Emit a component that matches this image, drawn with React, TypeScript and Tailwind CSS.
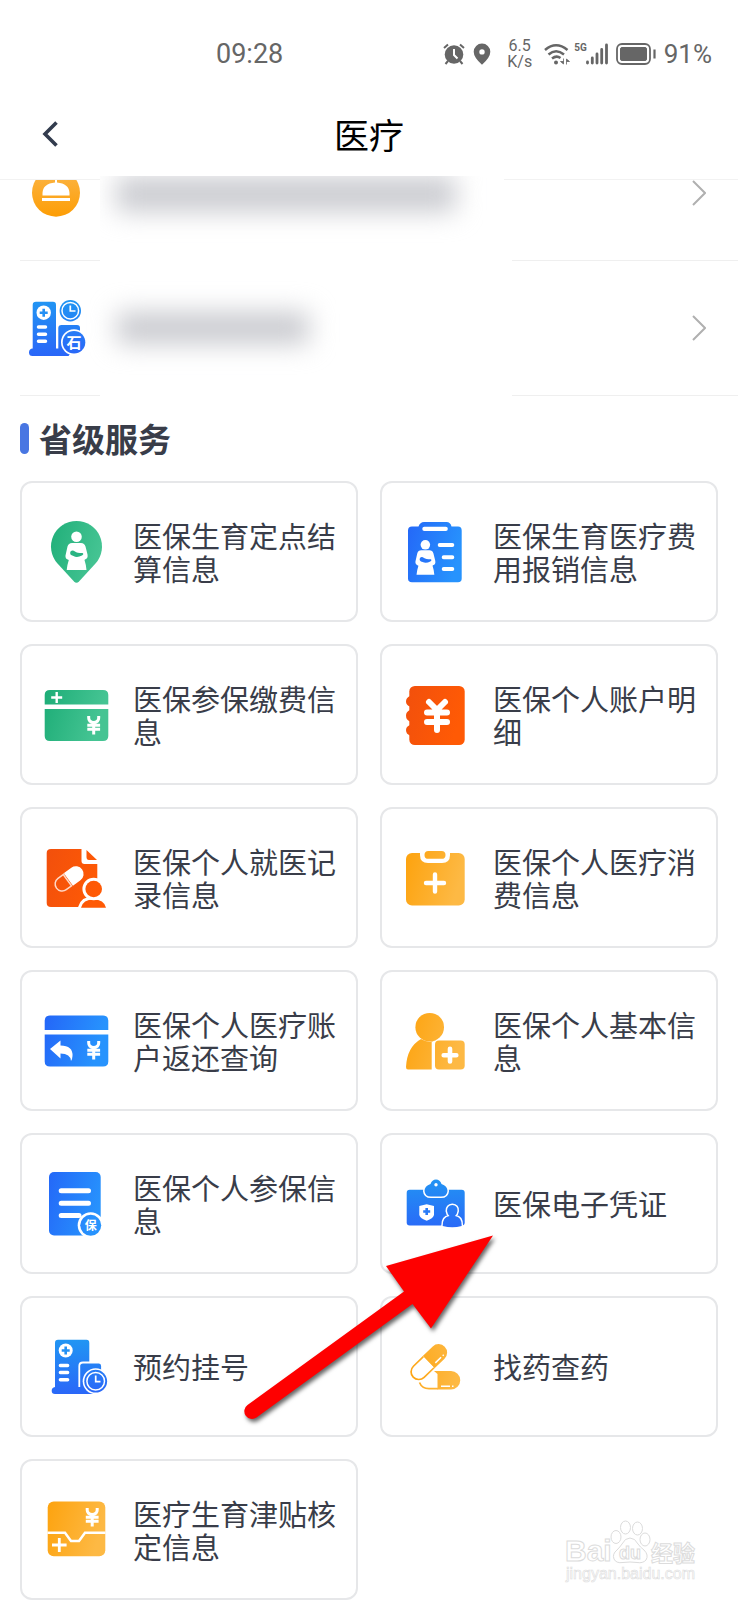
import React from 'react';

type Tone = 'blue' | 'blueDown' | 'green' | 'red' | 'orange';

const tones: Record<Tone, { from: string; to: string; down?: boolean }> = {
  blue: { from: '#2468f8', to: '#2793fd' },
  blueDown: { from: '#2196f3', to: '#2a66f8', down: true },
  green: { from: '#1fae78', to: '#45c493' },
  red: { from: '#f2500c', to: '#ff5a05' },
  orange: { from: '#fda30f', to: '#fdb944' },
};

interface IconProps {
  id: string;
  tone: Tone;
  children: React.ReactNode;
}

function Icon({ id, tone, children }: IconProps) {
  const { from, to, down } = tones[tone];
  return (
    <svg viewBox="0 0 65 64" className="h-16 w-[65px] shrink-0" fill={`url(#${id})`} aria-hidden="true">
      <defs>
        <linearGradient id={id} gradientUnits="userSpaceOnUse" x1="4" y1="4" x2={down ? 4 : 60} y2={down ? 60 : 20}>
          <stop stopColor={from} />
          <stop offset="1" stopColor={to} />
        </linearGradient>
      </defs>
      {children}
    </svg>
  );
}

// Yuan sign inside a 14x19 box
function Yuan({ x, y }: { x: number; y: number }) {
  return (
    <path
      transform={`translate(${x} ${y})`}
      d="M2.200 .5V2.500Q2.200 6.500 7.200 7Q12.200 6.500 12.200 2.500V.5M7.200 6V19M.8 9.700H13.600M.8 13.800H13.600"
      fill="none"
      stroke="#fff"
      strokeWidth="3"
    />
  );
}

function Mother({ x, y, baby }: { x: number; y: number; baby: string }) {
  return (
    <g transform={`translate(${x} ${y})`}>
      <circle cx="11.500" cy="5.300" r="5.300" fill="#fff" />
      <path
        d="M7 11.500H16Q19.500 11.500 20.500 15L22.500 23Q23.300 27 20 28L19.500 28.500Q21 33 21.500 38.500H1.700Q2.300 33 3.800 28.500Q0 27.500 .5 24L2.500 15Q3.500 11.500 7 11.500Z"
        fill="#fff"
      />
      <path
        d="M5.500 20Q7.500 17.800 10 20Q12 21.500 17.500 21.500Q19.300 22.500 17 24Q12 26.500 8.500 24.500Q4 23.500 5.500 20Z"
        fill={baby}
      />
    </g>
  );
}

const icons = {
  pin: (
    <Icon id="pin" tone="green">
      <path d="M32.500 1A25.500 25.500 0 0 1 51.500 43.500L35 61.500Q32.500 64 30 61.500L13.500 43.500A25.500 25.500 0 0 1 32.500 1Z" />
      <Mother x={21} y={11.5} baby="#2ab482" />
    </Icon>
  ),
  clipboard: (
    <Icon id="clipboard" tone="blue">
      <path d="M8 6.500H14.500Q16 2 20 2H42.500Q46.500 2 47.500 6.500H54Q57.700 6.500 57.700 10.500V58.500Q57.700 62.300 54 62.300H8Q4 62.300 4 58.500V10.500Q4 6.500 8 6.500Z" />
      <rect x="18.300" y="6.700" width="25.500" height="4.300" rx="2" fill="#fff" />
      <g transform="translate(11 20) scale(.9)">
        <Mother x={0} y={0} baby="#2676fa" />
      </g>
      <path d="M35.700 25H48.300M39.700 37.300H48.300M39.700 49H48.300" stroke="#fff" strokeWidth="4" strokeLinecap="round" />
    </Icon>
  ),
  card: (
    <Icon id="card" tone="green">
      <path d="M6 7H59Q64.300 7 64.300 12V21.500H.7V12Q.7 7 6 7ZM.7 26H64.300V53Q64.300 58 59 58H6Q.7 58 .7 53Z" />
      <path d="M12.700 9V20M7.200 14.500H18.200" stroke="#fff" strokeWidth="2.400" />
      <Yuan x={42.5} y={32.5} />
    </Icon>
  ),
  account: (
    <Icon id="account" tone="red">
      <rect x="5.300" y="3" width="55.400" height="59" rx="5.500" />
      <path d="M10 13H6Q2 14.500 2 18.500Q2 22 6 23.500H10ZM10 27H6Q2 28.500 2 32.500Q2 37 6 38.500H10ZM10 42H6Q2 43.500 2 47Q2 51 6 52.500H10Z" />
      <path d="M25 19L33 27L41 19M23 29.500H43M23 39H43M33 27V47" fill="none" stroke="#fff" strokeWidth="6" strokeLinecap="round" strokeLinejoin="round" />
    </Icon>
  ),
  record: (
    <Icon id="record" tone="red">
      <path d="M7 3H37.500V15Q37.500 18 40.500 18H53.300V61H7Q2.700 61 2.700 57V7Q2.700 3 7 3ZM42.500 4L53 14H45Q42.500 14 42.500 11Z" />
      <g transform="rotate(-36 25 33)">
        <path d="M25 26H33.500A7 7 0 0 1 33.500 40H25Z" fill="#fff" stroke="#fff" strokeWidth="1.500" />
        <path d="M25 26H16.500A7 7 0 0 0 16.500 40H23V26" fill="none" stroke="#ffd8c6" strokeWidth="1.500" />
      </g>
      <g stroke="#fff" strokeWidth="6" paintOrder="stroke">
        <path d="M37 61.700Q39 53.500 49.500 53.500Q60 53.500 62 61.700Z" />
        <circle cx="49.700" cy="43" r="8.300" />
      </g>
      <path d="M34 62H65V64H34Z" fill="#fff" />
    </Icon>
  ),
  expense: (
    <Icon id="expense" tone="orange">
      <rect x="2" y="7" width="58.700" height="52.500" rx="6" />
      <path d="M16 6V9Q16 17 24 17H38Q46 17 46 9V6Z" fill="#fff" />
      <rect x="20.500" y="5" width="21" height="7.800" rx="3.900" />
      <path d="M31 28.500V45.500M22 37H40" stroke="#fff" strokeWidth="4.400" strokeLinecap="round" />
    </Icon>
  ),
  refund: (
    <Icon id="refund" tone="blue">
      <path d="M6 6.500H59Q64.300 6.500 64.300 11.500V21H.7V11.500Q.7 6.500 6 6.500ZM.7 25.500H64.300V52.500Q64.300 57.500 59 57.500H6Q.7 57.500 .7 52.500Z" />
      <path d="M6 40L16.500 31.500V36.500Q29 36.500 28.500 47Q28.300 50.500 27 52Q26.500 44.500 16.500 44.500V49.500Z" fill="#fff" />
      <Yuan x={42.5} y={31.5} />
    </Icon>
  ),
  profile: (
    <Icon id="profile" tone="orange">
      <circle cx="25.700" cy="18.200" r="14.300" />
      <path d="M17 30Q26 35.500 34 30L27.700 33V60.500H4Q2 60.500 2 58Q3 38 17 30Z" />
      <rect x="31" y="31.500" width="29.700" height="29" rx="4" />
      <path d="M46 39.800V52.500M39.700 46.200H52.300" stroke="#fff" strokeWidth="4.600" strokeLinecap="round" />
    </Icon>
  ),
  insured: (
    <Icon id="insured" tone="blue">
      <rect x="5" y="0" width="51.700" height="63.500" rx="5" />
      <path d="M17.200 18.800H44.500M17.200 31.200H44.500M17.200 43.500H35" stroke="#fff" strokeWidth="5" strokeLinecap="round" />
      <circle cx="46.700" cy="53.300" r="13" fill="#fff" />
      <circle cx="46.700" cy="53.300" r="10.500" />
      <text x="46.700" y="57.800" textAnchor="middle" fill="#fff" className="font-['Noto_Sans_CJK_SC',sans-serif] text-[12px] font-bold">
        保
      </text>
    </Icon>
  ),
  voucher: (
    <Icon id="voucher" tone="blueDown">
      <rect x="2.700" y="17.800" width="58" height="35.700" rx="3" />
      <path
        d="M32 7.500Q36 7.500 37.500 12Q43.500 14 43.500 19Q43 24.500 37 24.500H27Q21 24.500 20.500 19Q20.500 14 26.500 12Q28 7.500 32 7.500Z"
        stroke="#fff"
        strokeWidth="3"
        paintOrder="stroke"
      />
      <circle cx="32" cy="12.800" r="1.700" fill="#fff" />
      <path d="M15.300 34L22.700 32.300L30 34V43Q29 46.500 22.700 48.700Q16.300 46.500 15.300 43Z" fill="#fff" />
      <path d="M22.700 36V43M19.200 39.500H26.200" stroke="#287af7" strokeWidth="2.600" />
      <path
        d="M48.300 33Q54 33.500 53.500 39Q53 42.500 51 44Q58 45 57.700 54Q48.300 56.500 38.700 54Q38.500 45 45.500 44Q43.500 42.500 43 39Q43 33.500 48.300 33Z"
        stroke="#fff"
        strokeWidth="3"
        paintOrder="stroke"
      />
    </Icon>
  ),
  booking: (
    <Icon id="booking" tone="blueDown">
      <path d="M14 4.800H42.500Q45.300 4.800 45.300 8V59H11Q7.700 59 7.700 55.700Q7.700 52.500 11 52V8Q11 4.800 14 4.800Z" />
      <path d="M35.300 52V31Q35.300 27.500 39 27.500H55Q58 27.500 58 31V59H40" stroke="#fff" strokeWidth="1.800" />
      <path d="M35 53H50V59H30Z" />
      <circle cx="21.700" cy="15.500" r="7" fill="#fff" />
      <path d="M21.700 11.500V19.500M17.700 15.500H25.700" stroke="#2491f4" strokeWidth="2.600" />
      <path d="M16.400 30.500H23.600M16.400 37.500H23.600M16.400 44.700H23.600" stroke="#fff" strokeWidth="3.500" strokeLinecap="round" />
      <circle cx="51.700" cy="46.200" r="13" fill="#fff" />
      <circle cx="51.700" cy="46.200" r="11.400" />
      <circle cx="51.700" cy="46.200" r="8.800" fill="none" stroke="#fff" strokeWidth="1.500" />
      <path d="M51.700 40.500V46.700H56.500" fill="none" stroke="#fff" strokeWidth="1.700" />
    </Icon>
  ),
  pills: (
    <Icon id="pills" tone="orange">
      <path d="M30 36H47A9.200 9.200 0 0 1 47 54.500H33.500V39Z" />
      <path d="M15.500 47.500Q18 53.700 25 53.700H34" fill="none" stroke="url(#pills)" strokeWidth="1.700" />
      <path d="M37 51.200H46M48 51.200H49.500" stroke="#fff" strokeWidth="1.500" />
      <g transform="rotate(-44 24.700 27.200)">
        <path d="M24.700 18.700H38.500A8.500 8.500 0 0 1 38.500 35.700H24.700Z" />
        <path d="M24.700 19.500H10.900A7.700 7.700 0 0 0 10.900 34.900H24.700" fill="#fff" stroke="url(#pills)" strokeWidth="1.700" />
        <path d="M29 32.300H37M39.300 32.300H40.600" stroke="#fff" strokeWidth="1.500" />
      </g>
    </Icon>
  ),
  subsidy: (
    <Icon id="subsidy" tone="orange">
      <rect x="3.700" y="3.500" width="57.600" height="54.700" rx="6" />
      <path d="M3.500 34.700H21L27 43H35L41 34.700H61.500" fill="none" stroke="#fff" strokeWidth="2.500" />
      <path d="M15.300 40V54M8 47H22.600" stroke="#fff" strokeWidth="2.800" />
      <Yuan x={41} y={9.5} />
    </Icon>
  ),
  hospital: (
    <Icon id="hospital" tone="blueDown">
      <path d="M12 5.700H29Q32 5.700 32 9V52.500H34.300V32Q34.300 29 37.500 29H53Q56 29 56 32V60H8.500Q5 60 5 56.500Q5 52.800 8.700 52.500V9Q8.700 5.700 12 5.700Z" />
      <circle cx="19.700" cy="16.700" r="7.200" fill="#fff" />
      <path d="M19.700 12.700V20.700M15.700 16.700H23.700" stroke="#2490f4" strokeWidth="2.600" />
      <path d="M14.500 31H21.500M14.500 38.300H21.500M14.500 45.300H21.500" stroke="#fff" strokeWidth="3.500" strokeLinecap="round" />
      <circle cx="46.300" cy="14.700" r="10.700" />
      <circle cx="46.300" cy="14.700" r="8.300" fill="none" stroke="#fff" strokeWidth="1.500" />
      <path d="M46.300 9.500V15H51.500" fill="none" stroke="#fff" strokeWidth="1.700" />
      <path d="M46 58H60V62H43Z" fill="#fff" />
      <circle cx="50" cy="46.300" r="13" fill="#fff" />
      <circle cx="50" cy="46.300" r="11.300" />
      <text x="50" y="52" textAnchor="middle" fill="#fff" className="font-['Noto_Sans_CJK_SC',sans-serif] text-[15px] font-bold">
        石
      </text>
    </Icon>
  ),
};

const services: { label: string; icon: keyof typeof icons }[] = [
  { label: '医保生育定点结算信息', icon: 'pin' },
  { label: '医保生育医疗费用报销信息', icon: 'clipboard' },
  { label: '医保参保缴费信息', icon: 'card' },
  { label: '医保个人账户明细', icon: 'account' },
  { label: '医保个人就医记录信息', icon: 'record' },
  { label: '医保个人医疗消费信息', icon: 'expense' },
  { label: '医保个人医疗账户返还查询', icon: 'refund' },
  { label: '医保个人基本信息', icon: 'profile' },
  { label: '医保个人参保信息', icon: 'insured' },
  { label: '医保电子凭证', icon: 'voucher' },
  { label: '预约挂号', icon: 'booking' },
  { label: '找药查药', icon: 'pills' },
  { label: '医疗生育津贴核定信息', icon: 'subsidy' },
];

function StatusBar() {
  return (
    <div className="flex h-[76px] items-center justify-between pt-8 pr-[26px] pl-[216px] font-[Roboto,sans-serif] text-[#666]">
      <span className="text-[27px]">09:28</span>
      <div className="flex items-center gap-2">
        <svg viewBox="0 0 22 22" className="size-[22px]" fill="#666" aria-hidden="true">
          <circle cx="11" cy="11.500" r="9.300" />
          <path d="M1 5L5 1.500M21 5L17 1.500M5 18L2.500 21M17 18L19.500 21" stroke="#666" strokeWidth="2" />
          <path d="M11 6V12L14.500 15.500" fill="none" stroke="#fff" strokeWidth="2" />
        </svg>
        <svg viewBox="0 0 18 22" className="h-[22px] w-[18px]" fill="#666" aria-hidden="true">
          <path d="M9 .5A8.300 8.300 0 0 1 17.300 8.800Q17.300 14.500 9 21.800Q.7 14.500 .7 8.800A8.300 8.300 0 0 1 9 .5ZM9 6.200A2.700 2.700 0 1 0 9 11.600A2.700 2.700 0 1 0 9 6.200Z" />
        </svg>
        <span className="mr-1 ml-2 flex flex-col text-center text-base leading-4">
          <span>6.5</span>
          <span>K/s</span>
        </span>
        <svg viewBox="0 0 26 22" className="h-[22px] w-[26px]" fill="none" stroke="#666" strokeWidth="2.500" aria-hidden="true">
          <path d="M1 7Q12 -2.500 23.500 7M4.500 11.500Q12 5 20 11.500M8 15.500Q12.500 12 16.500 15" />
          <circle cx="12" cy="19.500" r="2" fill="#666" stroke="none" />
          <path d="M19.500 15.500V21L16.500 18.500H19.500M22.500 21.500V16L25.500 18.500H22.500" fill="#666" strokeWidth=".8" />
        </svg>
        <span className="-ml-1 flex items-start">
          <span className="-mr-px text-[10px] leading-[10px] font-bold">5G</span>
          <svg viewBox="0 0 22 22" className="size-[22px]" stroke="#666" strokeWidth="2.800" strokeLinecap="round" aria-hidden="true">
            <path d="M1.500 19V20M6.300 15V20M11 11V20M15.700 6.500V20M20.500 2V20" />
          </svg>
        </span>
        <svg viewBox="0 0 40 22" className="h-[22px] w-10" fill="none" stroke="#666" aria-hidden="true">
          <rect x="1" y="1" width="33" height="20" rx="5" strokeWidth="1.800" />
          <rect x="4.500" y="4.500" width="26" height="13" rx="1.500" fill="#666" />
          <path d="M38.500 6.500V15.500" strokeWidth="2.200" />
        </svg>
        <span className="text-[26px]">91%</span>
      </div>
    </div>
  );
}

// The hairline is interrupted where the hidden text sits
function Divider() {
  return (
    <div className="flex justify-between">
      <div className="h-px w-20 bg-[#efefef]" />
      <div className="h-px w-[226px] bg-[#efefef]" />
    </div>
  );
}

function Chevron() {
  return (
    <svg viewBox="0 0 14 26" className="h-[26px] w-3.5 shrink-0" fill="none" stroke="#b0b0b0" strokeWidth="2" aria-hidden="true">
      <path d="M1 1L13 13L1 25" />
    </svg>
  );
}

export default function App() {
  return (
    <main className="relative overflow-hidden bg-white font-['Noto_Sans_CJK_SC',sans-serif] text-[#393d49]">
      <StatusBar />
      <header className="flex h-[100px] items-center pt-4 pr-[58px] pl-[42px]">
        <button type="button" aria-label="返回">
          <svg viewBox="0 0 16 26" className="h-[26px] w-4" fill="none" stroke="#333c4e" strokeWidth="3.600" aria-hidden="true">
            <path d="M14.500 1.500L3 13L14.500 24.500" />
          </svg>
        </button>
        <h1 className="flex-1 text-center text-[35px] text-black">医疗</h1>
      </header>

      <section>
        <div className="relative">
          <div className="flex h-1 items-end justify-between">
            <div className="h-px w-[100px] bg-[#f2f2f2]" />
            <div className="h-px w-[234px] bg-[#f2f2f2]" />
          </div>
          <button type="button" aria-label="服务" className="flex h-20 w-full items-start justify-between pr-8 pl-8">
            <svg viewBox="0 12 48 37" className="h-[37px] w-12" aria-hidden="true">
              <defs>
                <linearGradient id="bell" x2="0" y2="1">
                  <stop stopColor="#fbb648" />
                  <stop offset="1" stopColor="#fd9d05" />
                </linearGradient>
              </defs>
              <circle cx="24" cy="24.700" r="24" fill="url(#bell)" />
              <path d="M10.500 27.500V25Q11 15.500 23 14.500V12H25V14.500Q37 15.500 37.500 25V27.500ZM10 30H38V33H10Z" fill="#fff" />
            </svg>
            <Chevron />
          </button>
          <div className="absolute top-0 left-[100px] h-20 w-[400px] overflow-hidden">
            <div className="h-9 w-[356px] pl-4">
              <div className="h-full rounded bg-[#cbccd1] blur-[13px]" />
            </div>
          </div>
        </div>
        <div className="pl-5">
          <Divider />
          <button type="button" aria-label="服务" className="flex h-[134px] w-full items-center pr-8 pl-1">
            {icons.hospital}
            <span className="ml-7 h-8 w-[192px] rounded bg-[#c9cacf] blur-[13px]" />
            <span className="flex flex-1 justify-end">
              <Chevron />
            </span>
          </button>
          <Divider />
        </div>
      </section>

      <section className="px-5">
        <h2 className="flex h-[85px] items-center gap-2.5 text-[33px] font-bold">
          <span className="h-[31px] w-[9px] rounded-full bg-[#4876e2]" />
          省级服务
        </h2>
        <div className="grid grid-cols-2 gap-[22px]">
          {services.map(({ label, icon }) => (
            <button
              key={label}
              type="button"
              className="flex h-[141px] items-center gap-6 rounded-xl border-2 border-[#e6e7e9] pr-2 pl-[22px] text-left text-[29px] leading-[33px]"
            >
              {icons[icon]}
              <span className="flex-1">{label}</span>
            </button>
          ))}
        </div>
      </section>

      <svg
        viewBox="0 0 270 200"
        className="pointer-events-none absolute bottom-[170px] left-[240px] h-[200px] w-[270px] drop-shadow-[2px_3px_2px_rgba(0,0,0,0.6)]"
        aria-hidden="true"
      >
        <path d="M253 5.500L146 36L164 61.500L7.500 175A7.700 7.700 0 0 0 16.500 187.500L172.500 74L191 98.500Z" fill="#fe0000" />
      </svg>

      <svg viewBox="0 0 144 76" className="absolute right-[34px] bottom-2 h-[76px] w-36" fill="#fff" stroke="#dcdcdc" strokeWidth="1">
        <text x="5" y="45" className="font-['Liberation_Sans',sans-serif] text-[30px] font-bold">
          Bai
        </text>
        <g>
          <ellipse cx="56" cy="21" rx="5" ry="6.500" />
          <ellipse cx="65.500" cy="11.500" rx="5" ry="6.500" />
          <ellipse cx="77.500" cy="12.500" rx="5" ry="6.500" />
          <ellipse cx="85" cy="23.500" rx="5" ry="6.500" />
          <path d="M70 22Q75 22 78 28Q80 31 84 34Q89 39 86 44Q83 47.500 77 46.500Q70 45.500 63 46.500Q56 47.500 54 43Q52 38 57 34Q60 31 62 28Q65 22 70 22Z" />
        </g>
        <text x="59" y="43" className="font-['Liberation_Sans',sans-serif] text-[18px] font-bold">
          du
        </text>
        <text x="91" y="45" className="font-['Noto_Sans_CJK_SC',sans-serif] text-[22px] font-bold">
          经验
        </text>
        <text x="6" y="63" strokeWidth="0.600" className="font-['Liberation_Sans',sans-serif] text-[16px]">
          jingyan.baidu.com
        </text>
      </svg>
    </main>
  );
}
